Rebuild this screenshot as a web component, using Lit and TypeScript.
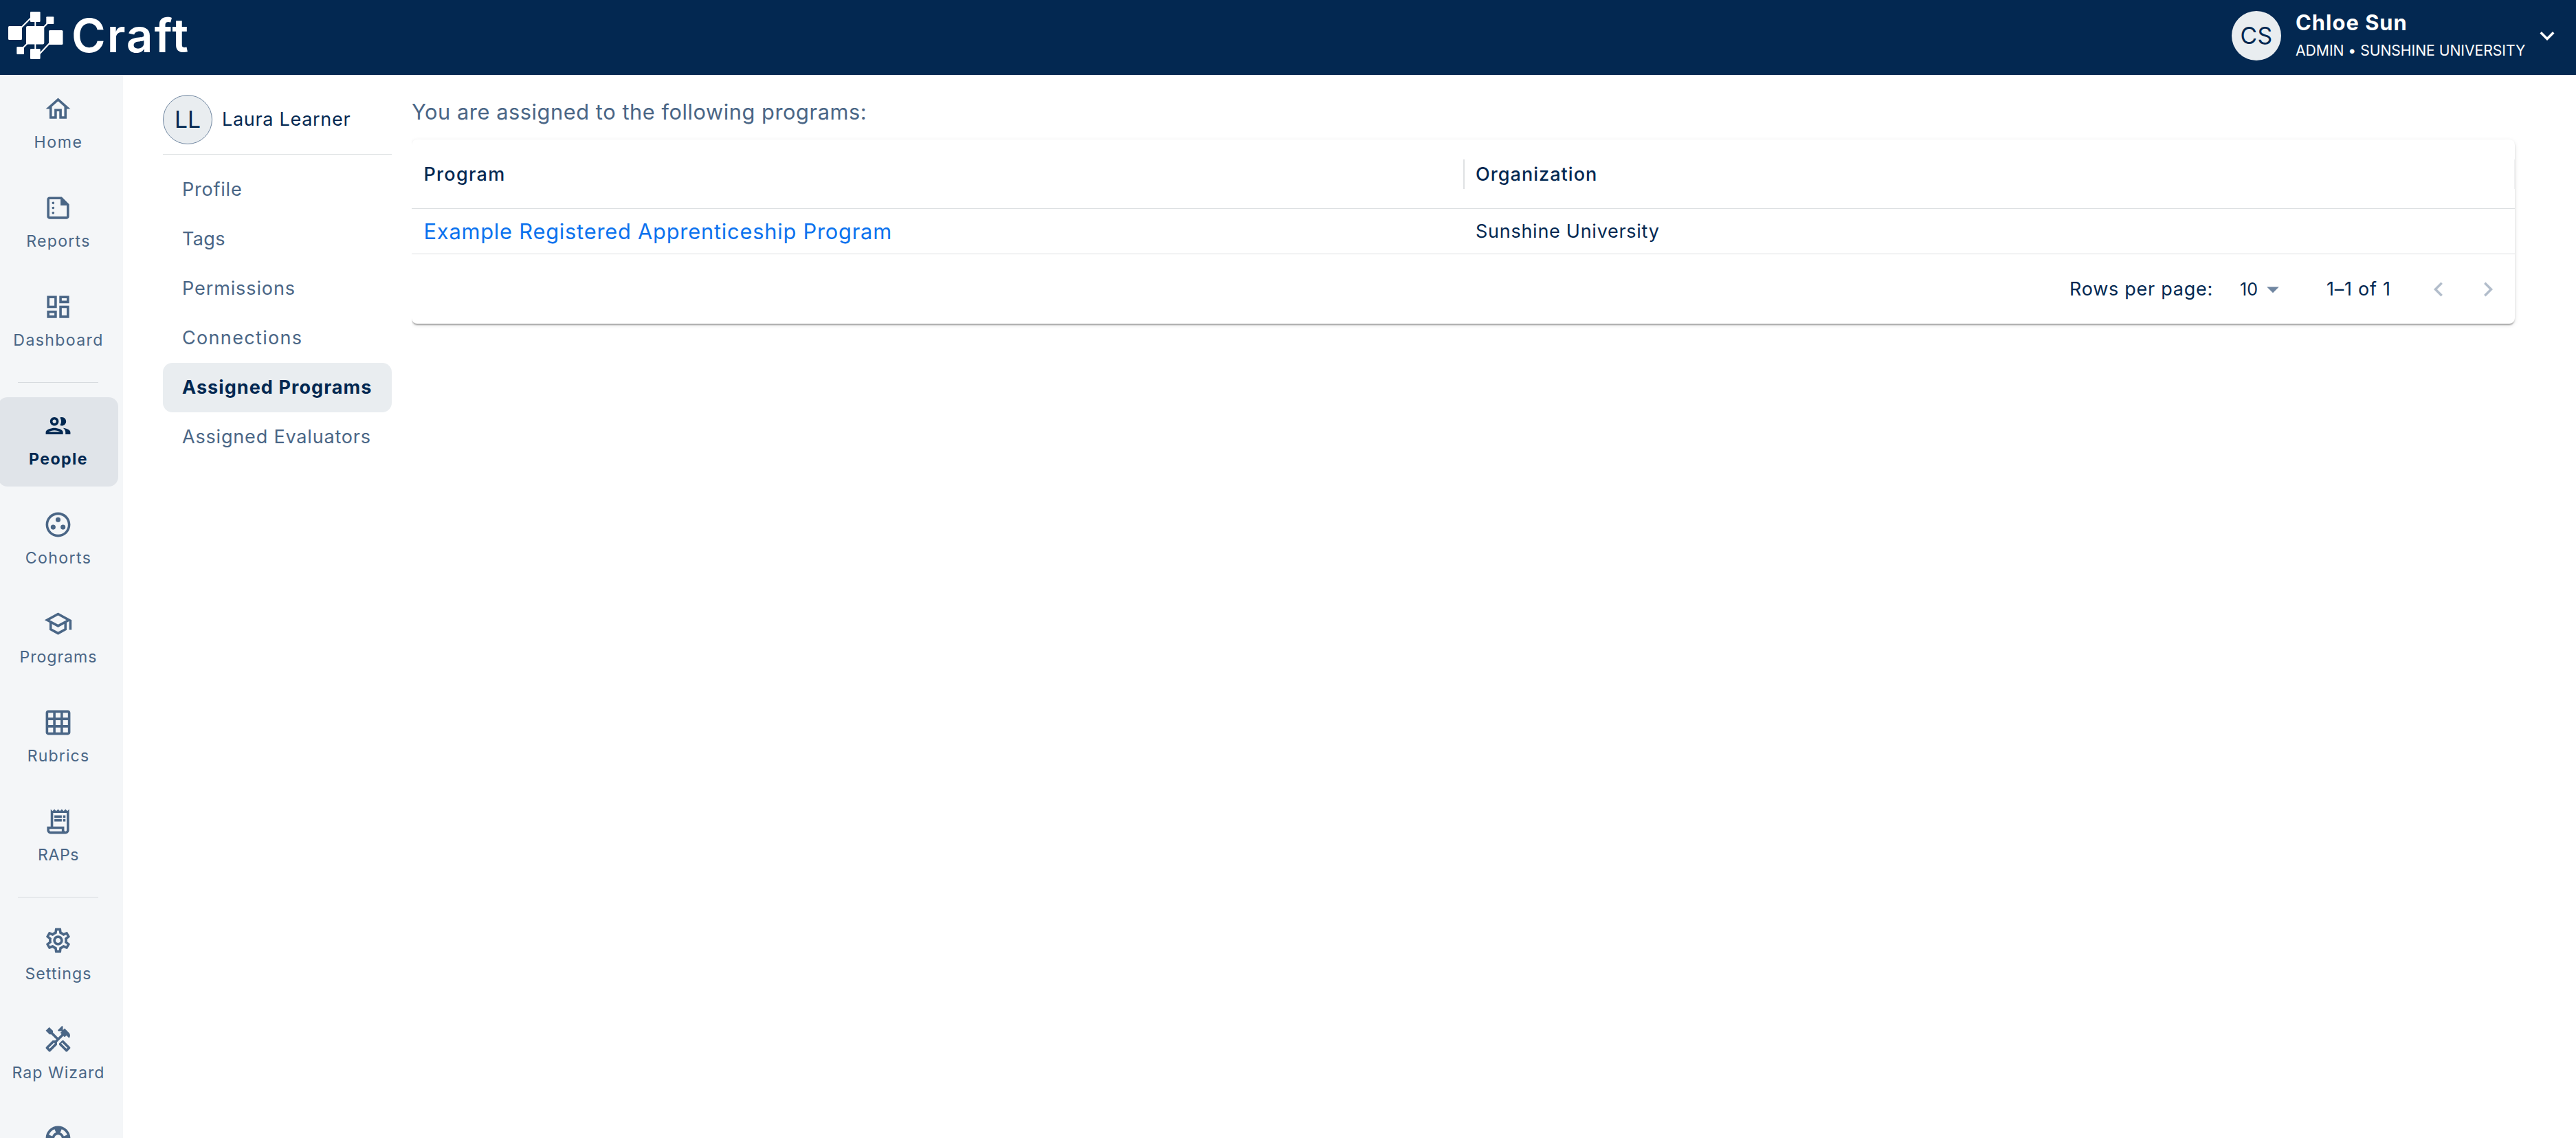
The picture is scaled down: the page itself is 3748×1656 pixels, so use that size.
import { LitElement, html, css, svg } from "lit";
import { customElement, property } from "lit/decorators.js";
import { classMap } from "lit/directives/class-map.js";
import { styleMap } from "lit/directives/style-map.js";

type Label = { text: string; spacing: number };
type NavItem = Label & { icon: string; active?: boolean };

const ICONS: Record<string, string> = {
  home: "m12 5.69 5 4.5V18h-2v-6H9v6H7v-7.81l5-4.5M12 3 2 12h3v8h6v-6h2v6h6v-8h3L12 3z",
  reports:
    "M15 3H5c-1.1 0-1.99.9-1.99 2L3 19c0 1.1.89 2 1.99 2H19c1.1 0 2-.9 2-2V9l-6-6zM5 19V5h9v5h5v9H5zM9 8c0 .55-.45 1-1 1s-1-.45-1-1 .45-1 1-1 1 .45 1 1zm0 4c0 .55-.45 1-1 1s-1-.45-1-1 .45-1 1-1 1 .45 1 1zm0 4c0 .55-.45 1-1 1s-1-.45-1-1 .45-1 1-1 1 .45 1 1z",
  dashboard:
    "M19 5v2h-4V5h4M9 5v6H5V5h4m10 8v6h-4v-6h4M9 17v2H5v-2h4M21 3h-8v6h8V3zM11 3H3v10h8V3zm10 8h-8v10h8V11zm-10 4H3v6h8v-6z",
  people:
    "M9 13.75c-2.34 0-7 1.17-7 3.5V19h14v-1.75c0-2.33-4.66-3.5-7-3.5zM4.34 17c.84-.58 2.87-1.25 4.66-1.25s3.82.67 4.66 1.25H4.34zM9 12c1.93 0 3.5-1.57 3.5-3.5S10.93 5 9 5 5.5 6.57 5.5 8.5 7.07 12 9 12zm0-5c.83 0 1.5.67 1.5 1.5S9.83 10 9 10s-1.5-.67-1.5-1.5S8.17 7 9 7zm7.04 6.81c1.16.84 1.96 1.96 1.96 3.44V19h4v-1.75c0-2.02-3.5-3.17-5.96-3.44zM15 12c1.93 0 3.5-1.57 3.5-3.5S16.93 5 15 5c-.54 0-1.04.13-1.5.35.63.89 1 1.98 1 3.15s-.37 2.26-1 3.15c.46.22.96.35 1.5.35z",
  cohorts:
    "M12 2C6.48 2 2 6.48 2 12s4.48 10 10 10 10-4.48 10-10S17.52 2 12 2zm0 18c-4.41 0-8-3.59-8-8s3.59-8 8-8 8 3.59 8 8-3.59 8-8 8zM6 14a2 2 0 1 0 4 0a2 2 0 1 0-4 0zM10 8a2 2 0 1 0 4 0a2 2 0 1 0-4 0zM14 14a2 2 0 1 0 4 0a2 2 0 1 0-4 0z",
  programs:
    "M12 3 1 9l4 2.18v6L12 21l7-3.82v-6l2-1.09V17h2V9L12 3zm6.82 6L12 12.72 5.18 9 12 5.28 18.82 9zM17 15.99l-5 2.73-5-2.73v-3.72L12 15l5-2.73v3.72z",
  rubrics:
    "M20 2H4c-1.1 0-2 .9-2 2v16c0 1.1.9 2 2 2h16c1.1 0 2-.9 2-2V4c0-1.1-.9-2-2-2zM8 20H4v-4h4v4zm0-6H4v-4h4v4zm0-6H4V4h4v4zm6 12h-4v-4h4v4zm0-6h-4v-4h4v4zm0-6h-4V4h4v4zm6 12h-4v-4h4v4zm0-6h-4v-4h4v4zm0-6h-4V4h4v4z",
  raps: "M19.5 3.5 18 2l-1.5 1.5L15 2l-1.5 1.5L12 2l-1.5 1.5L9 2 7.5 3.5 6 2v14H3v3c0 1.66 1.34 3 3 3h12c1.66 0 3-1.34 3-3V2l-1.5 1.5zM15 20H6c-.55 0-1-.45-1-1v-1h10v2zm4-1c0 .55-.45 1-1 1s-1-.45-1-1v-3H8V5h11v14zM9 7h6v2H9zM16 7h2v2h-2zM9 10h6v2H9zM16 10h2v2h-2z",
  settings:
    "M19.43 12.98c.04-.32.07-.64.07-.98 0-.34-.03-.66-.07-.98l2.11-1.65c.19-.15.24-.42.12-.64l-2-3.46c-.09-.16-.26-.25-.44-.25-.06 0-.12.01-.17.03l-2.49 1c-.52-.4-1.08-.73-1.69-.98l-.38-2.65C14.46 2.18 14.25 2 14 2h-4c-.25 0-.46.18-.49.42l-.38 2.65c-.61.25-1.17.59-1.69.98l-2.49-1c-.06-.02-.12-.03-.18-.03-.17 0-.34.09-.43.25l-2 3.46c-.13.22-.07.49.12.64l2.11 1.65c-.04.32-.07.65-.07.98 0 .33.03.66.07.98l-2.11 1.65c-.19.15-.24.42-.12.64l2 3.46c.09.16.26.25.44.25.06 0 .12-.01.17-.03l2.49-1c.52.4 1.08.73 1.69.98l.38 2.65c.03.24.24.42.49.42h4c.25 0 .46-.18.49-.42l.38-2.65c.61-.25 1.17-.59 1.69-.98l2.49 1c.06.02.12.03.18.03.17 0 .34-.09.43-.25l2-3.46c.12-.22.07-.49-.12-.64l-2.11-1.65zm-1.98-1.71c.04.31.05.52.05.73 0 .21-.02.43-.05.73l-.14 1.13.89.7 1.08.84-.7 1.21-1.27-.51-1.04-.42-.9.68c-.43.32-.84.56-1.25.73l-1.06.43-.16 1.13-.2 1.35h-1.4l-.19-1.35-.16-1.13-1.06-.43c-.43-.18-.83-.41-1.23-.71l-.91-.7-1.06.43-1.27.51-.7-1.21 1.08-.84.89-.7-.14-1.13c-.03-.31-.05-.54-.05-.74s.02-.43.05-.73l.14-1.13-.89-.7-1.08-.84.7-1.21 1.27.51 1.04.42.9-.68c.43-.32.84-.56 1.25-.73l1.06-.43.16-1.13.2-1.35h1.39l.19 1.35.16 1.13 1.06.43c.43.18.83.41 1.23.71l.91.7 1.06-.43 1.27-.51.7 1.21-1.07.85-.89.7.14 1.13zM12 8c-2.21 0-4 1.79-4 4s1.79 4 4 4 4-1.79 4-4-1.79-4-4-4zm0 6c-1.1 0-2-.9-2-2s.9-2 2-2 2 .9 2 2-.9 2-2 2z",
  wizard:
    "m21.67 18.17-5.3-5.3h-.99l-2.54 2.54v.99l5.3 5.3c.39.39 1.02.39 1.41 0l2.12-2.12c.39-.38.39-1.02 0-1.41zm-2.83 1.42-4.24-4.24.71-.71 4.24 4.24-.71.71zM17.34 10.19l1.41-1.41 2.12 2.12c1.17-1.17 1.17-3.07 0-4.24l-3.54-3.54-1.41 1.41V1.71L15.22 1l-3.54 3.54.71.71h2.83l-1.41 1.41 1.06 1.06-2.89 2.89-4.13-4.13V5.06L4.83 2.04 2 4.87 5.03 7.9h1.41l4.13 4.13-.85.85H7.6l-5.3 5.3c-.39.39-.39 1.02 0 1.41l2.12 2.12c.39.39 1.02.39 1.41 0l5.3-5.3v-2.12l5.15-5.15 1.06 1.05zm-7.98 5.15-4.24 4.24-.71-.71 4.24-4.24.71.71z",
  support:
    "M12 2C6.48 2 2 6.48 2 12s4.48 10 10 10 10-4.48 10-10S17.52 2 12 2zm7.46 7.12-2.78 1.15c-.51-1.36-1.58-2.44-2.95-2.94l1.15-2.78c2.1.8 3.77 2.47 4.58 4.57zM12 15c-1.66 0-3-1.34-3-3s1.34-3 3-3 3 1.34 3 3-1.34 3-3 3zM9.13 4.54l1.17 2.78c-1.38.5-2.47 1.59-2.98 2.97L4.54 9.13c.81-2.11 2.48-3.78 4.59-4.59zM4.54 14.87l2.78-1.15c.51 1.38 1.59 2.46 2.97 2.96l-1.17 2.78c-2.1-.81-3.77-2.48-4.58-4.59zM14.88 19.46l-1.15-2.78c1.37-.51 2.45-1.59 2.95-2.97l2.78 1.17c-.81 2.1-2.48 3.77-4.58 4.58z",
  down: "M16.59 8.59 12 13.17 7.41 8.59 6 10l6 6 6-6z",
  caret: "M7 10l5 5 5-5z",
  left: "M15.41 16.59 10.83 12l4.58-4.59L14 6l-6 6 6 6 1.41-1.41z",
  right: "M8.59 16.59 13.17 12 8.59 7.41 10 6l6 6-6 6-1.41-1.41z",
};

const NAV_GROUPS: NavItem[][] = [
  [
    { icon: "home", text: "Home", spacing: 1.6 },
    { icon: "reports", text: "Reports", spacing: 1.25 },
    { icon: "dashboard", text: "Dashboard", spacing: 1.35 },
  ],
  [
    { icon: "people", text: "People", spacing: 1.49, active: true },
    { icon: "cohorts", text: "Cohorts", spacing: 1.4 },
    { icon: "programs", text: "Programs", spacing: 0.95 },
    { icon: "rubrics", text: "Rubrics", spacing: 1.1 },
    { icon: "raps", text: "RAPs", spacing: 0.6 },
  ],
  [
    { icon: "settings", text: "Settings", spacing: 1.1 },
    { icon: "wizard", text: "Rap Wizard", spacing: 1 },
    { icon: "support", text: "", spacing: 0 },
  ],
];

const MENU: (Label & { active?: boolean })[] = [
  { text: "Profile", spacing: 0.78 },
  { text: "Tags", spacing: 0.35 },
  { text: "Permissions", spacing: 0.9 },
  { text: "Connections", spacing: 1.33 },
  { text: "Assigned Programs", spacing: 1.07, active: true },
  { text: "Assigned Evaluators", spacing: 0.82 },
];

const tracked = (l: Label) =>
  html`<span style=${styleMap({ letterSpacing: `${l.spacing}px` })}>${l.text}</span>`;

@customElement("app-icon")
export class AppIcon extends LitElement {
  @property() name = "home";
  static styles = css`
    :host { display: block; width: 43px; height: 43px; }
    svg { display: block; width: 100%; height: 100%; fill: currentColor; }
  `;
  render() {
    return html`<svg viewBox="0 0 24 24">${svg`<path d=${ICONS[this.name]}></path>`}</svg>`;
  }
}

@customElement("app-header")
export class AppHeader extends LitElement {
  static styles = css`
    :host {
      display: flex; justify-content: space-between; height: 109px; background: #032851;
      color: #fff; box-sizing: border-box; padding-right: 21px;
    }
    .brand { display: flex; }
    .mark { display: block; width: 92px; height: 109px; }
    .word { margin-left: 12px; font-size: 67.4px; font-weight: 600; letter-spacing: 2px; line-height: 104px; }
    .user { display: flex; }
    .avatar {
      width: 72px; height: 72px; margin-top: 16px; border-radius: 50%; background: #e9edf0;
      color: #032851; font-size: 33.7px; line-height: 72px; text-align: center; letter-spacing: 0.4px;
    }
    .who { width: 345px; margin-left: 21px; padding-top: 11px; white-space: nowrap; }
    .name { font-size: 30.8px; font-weight: 680; line-height: 44px; letter-spacing: 1.05px; }
    .role { font-size: 21.2px; line-height: 36px; letter-spacing: -0.05px; }
    app-icon { width: 42px; height: 42px; margin-top: 31px; }
  `;
  render() {
    return html`
      <div class="brand">
        <svg class="mark" viewBox="0 0 92 109">
          <path d="M31 40 46 25M51.3 30V40M70 33 61 42M32 71 41 62M51.3 63V73M73 62 57 79" stroke="#fff" stroke-width="2" fill="none" />
          <g fill="#fff">
            <rect x="38" y="38" width="26.3" height="26.5" rx="2" />
            <rect x="12" y="38" width="20" height="20" rx="1.6" />
            <rect x="71" y="44" width="20.5" height="21" rx="1.6" />
            <rect x="44" y="17" width="14.6" height="15" rx="1.3" />
            <rect x="67.3" y="24.3" width="11" height="10.7" rx="1" />
            <rect x="24.3" y="68" width="10.7" height="11" rx="1" />
            <rect x="44" y="71" width="14.6" height="15" rx="1.3" />
          </g>
        </svg>
        <span class="word">Craft</span>
      </div>
      <div class="user">
        <div class="avatar">CS</div>
        <div class="who">
          <div class="name">Chloe Sun</div>
          <div class="role">ADMIN • SUNSHINE UNIVERSITY</div>
        </div>
        <app-icon name="down"></app-icon>
      </div>
    `;
  }
}

@customElement("app-sidebar")
export class AppSidebar extends LitElement {
  static styles = css`
    :host {
      display: flex; flex-direction: column; flex: none; width: 179px; box-sizing: border-box;
      padding-top: 8px; background: #f4f6f8; overflow: hidden; color: #4a6686;
    }
    .group { display: flex; flex-direction: column; gap: 14px; flex: none; }
    .item {
      display: flex; flex-direction: column; align-items: center; width: 175px; height: 130px;
      margin-left: -3px; box-sizing: border-box; padding-top: 20px; border-radius: 14px;
      font-size: 23.1px; line-height: 32px; white-space: nowrap;
    }
    .item.active { background: #e0e4e9; color: #022851; font-weight: 680; }
    .label { margin-top: 11px; padding-left: 1px; }
    .divider { flex: none; height: 1px; width: 117px; margin: 21px 0 21px 26px; background: #d6dade; }
  `;
  render() {
    return NAV_GROUPS.map(
      (group, i) => html`
        ${i ? html`<div class="divider"></div>` : ""}
        <div class="group">
          ${group.map(
            (n) => html`<div class=${classMap({ item: true, active: !!n.active })}>
              <app-icon name=${n.icon}></app-icon>
              <div class="label">${tracked(n)}</div>
            </div>`
          )}
        </div>
      `
    );
  }
}

@customElement("app-profile-menu")
export class AppProfileMenu extends LitElement {
  static styles = css`
    :host { display: block; flex: none; width: 333px; margin: 29px 0 0 58px; color: #4a6686; font-size: 27px; }
    .person { display: flex; height: 86px; border-bottom: 1px solid #dcdfe1; color: #022851; }
    .avatar {
      box-sizing: border-box; width: 72px; height: 72px; border: 1px solid #7288a2; border-radius: 50%;
      background: #e9edf0; font-size: 33.7px; line-height: 69px; text-align: center;
    }
    .name { margin-left: 14px; line-height: 72px; letter-spacing: 0.7px; }
    .list { margin-top: 15px; }
    .entry { height: 72px; box-sizing: border-box; padding-left: 28px; line-height: 72px; border-radius: 14px; white-space: nowrap; }
    .entry.active { background: #e9edf0; color: #022851; font-weight: 690; }
  `;
  render() {
    return html`
      <div class="person">
        <div class="avatar">LL</div>
        <div class="name">Laura Learner</div>
      </div>
      <div class="list">
        ${MENU.map((m) => html`<div class=${classMap({ entry: true, active: !!m.active })}>${tracked(m)}</div>`)}
      </div>
    `;
  }
}

@customElement("app-programs")
export class AppPrograms extends LitElement {
  static styles = css`
    :host { display: block; width: 3060px; margin-left: 29px; padding-top: 32px; color: #022851; }
    .intro { color: #4a6686; font-size: 30.8px; line-height: 44px; letter-spacing: 0.54px; }
    .card {
      margin-top: 18px; border-radius: 8px; background: #fff; font-size: 27px; letter-spacing: 0.73px;
      box-shadow: 0 4px 2px -2px rgba(0, 0, 0, 0.2), 0 2px 2px 0 rgba(0, 0, 0, 0.14), 0 2px 6px 0 rgba(0, 0, 0, 0.12);
      clip-path: inset(-10px -10px -14px 0);
    }
    .row { display: grid; grid-template-columns: 1532px 1528px; border-bottom: 1px solid #dcdfe1; }
    .cell { display: flex; align-items: center; box-sizing: border-box; white-space: nowrap; padding-left: 17.5px; }
    .cell + .cell { padding-left: 16px; }
    .head { height: 100px; font-weight: 460; }
    .head .cell { height: 43px; align-self: center; border-right: 2px solid #dfe1e3; }
    .head .cell + .cell { border-right: 1px solid #eff0f1; }
    .program { letter-spacing: 1.3px; }
    .org { letter-spacing: 1.05px; }
    .body { height: 65px; }
    .link { color: #0b72ee; font-size: 30.8px; letter-spacing: 0.78px; }
    .footer {
      display: grid; justify-content: end; align-items: center; height: 101px; white-space: nowrap;
      grid-template-columns: 248px 27px 99px 142px 72px 60px;
    }
    .size { font-size: 25px; letter-spacing: 0.13px; }
    app-icon { width: 42px; height: 42px; }
    .caret { color: #7086a1; }
    .pager { color: #b2bdcb; }
  `;
  render() {
    return html`
      <div class="intro">You are assigned to the following programs:</div>
      <div class="card">
        <div class="row head">
          <div class="cell program">Program</div>
          <div class="cell org">Organization</div>
        </div>
        <div class="row body">
          <div class="cell link">Example Registered Apprenticeship Program</div>
          <div class="cell">Sunshine University</div>
        </div>
        <div class="footer">
          <span>Rows per page:</span>
          <span class="size">10</span>
          <app-icon class="caret" name="caret"></app-icon>
          <span>1–1 of 1</span>
          <app-icon class="pager" name="left"></app-icon>
          <app-icon class="pager" name="right"></app-icon>
        </div>
      </div>
    `;
  }
}

@customElement("app-root")
export class AppRoot extends LitElement {
  static styles = css`
    :host {
      display: flex; flex-direction: column; height: 100vh; overflow: hidden; background: #fff;
      font-family: Inter, "Liberation Sans", sans-serif; font-weight: 375;
    }
    app-header { flex: none; }
    .main { display: flex; flex: 1; min-height: 0; }
  `;
  render() {
    return html`
      <app-header></app-header>
      <div class="main">
        <app-sidebar></app-sidebar>
        <app-profile-menu></app-profile-menu>
        <app-programs></app-programs>
      </div>
    `;
  }
}
